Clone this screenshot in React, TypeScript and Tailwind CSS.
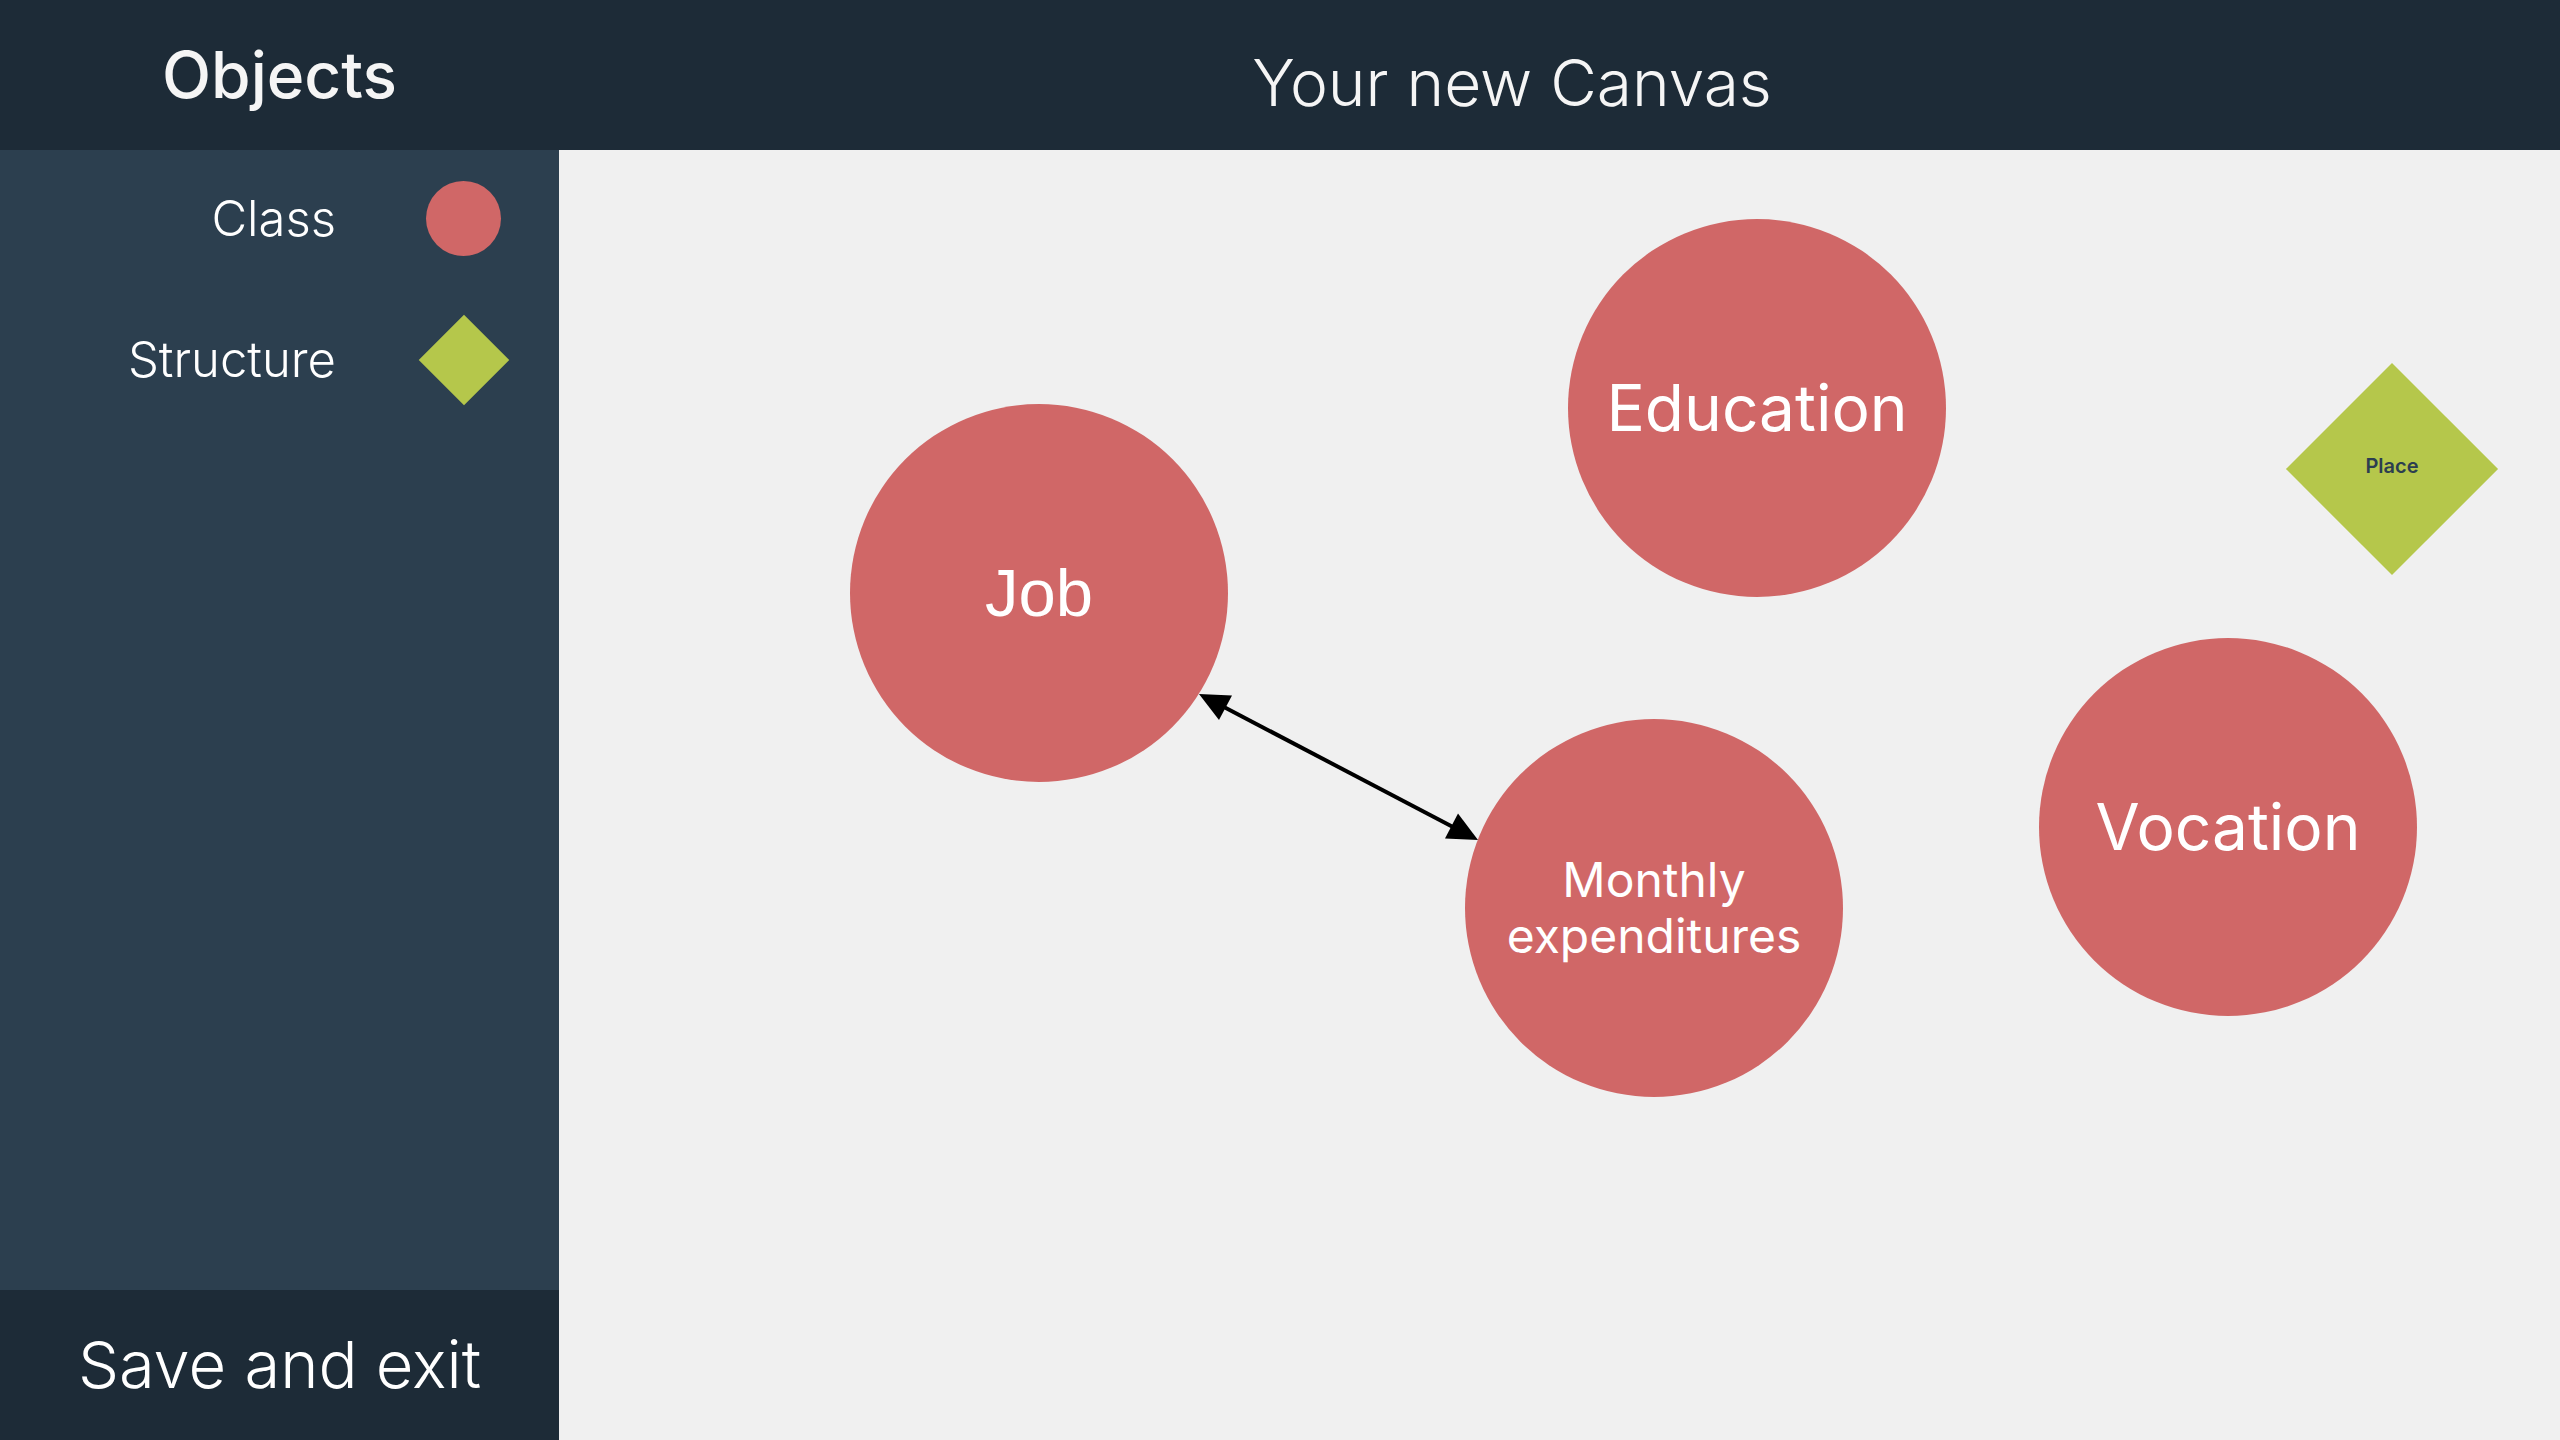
import React from "react";

type Node = {
  label: string;
  left: string;
  top: string;
  text: string;
};

const nodes: Node[] = [
  { label: "Education", left: "left-[1009px]", top: "top-[69px]", text: "text-[64px]" },
  { label: "Vocation", left: "left-[1480px]", top: "top-[488px]", text: "text-[64px]" },
];

function Circle({ node }: { node: Node }) {
  return (
    <div
      className={`absolute ${node.left} ${node.top} w-[378px] h-[378px] rounded-full bg-[#d06767] flex items-center justify-center text-white ${node.text}`}
    >
      {node.label}
    </div>
  );
}

export default function App() {
  return (
    <div className="h-screen w-full flex flex-col overflow-hidden font-['Inter','Noto_Sans',sans-serif]">
      {/* Header */}
      <div className="h-[150px] flex bg-[#1d2b37] text-[#f5f5f5]">
        <div className="w-[559px] flex items-center justify-center text-[64px] font-medium">
          Objects
        </div>
        <div className="flex-1 flex items-center justify-center pt-[15px] pr-[95px] text-[64px] font-light">
          Your new Canvas
        </div>
      </div>

      <div className="flex-1 flex">
        {/* Sidebar */}
        <div className="w-[559px] flex flex-col bg-[#2c3f4f]">
          <div className="flex-1 flex flex-col gap-[50px] pt-[23px] text-[49px] font-light text-white">
            <div className="h-[91px] flex items-center">
              <span className="w-[336px] text-right">Class</span>
              <div className="ml-[90px] w-[75px] flex justify-center">
                <div className="w-[75px] h-[75px] rounded-full bg-[#d06767]" />
              </div>
            </div>
            <div className="h-[91px] flex items-center">
              <span className="w-[336px] text-right">Structure</span>
              <div className="ml-[90px] w-[75px] flex justify-center">
                <div className="w-[64px] h-[64px] rotate-45 bg-[#b5c74b]" />
              </div>
            </div>
          </div>
          <button className="h-[150px] bg-[#1d2b37] text-white text-[65px] font-light flex items-center justify-center">
            Save and exit
          </button>
        </div>

        {/* Canvas */}
        <div className="flex-1 relative bg-[#f0f0f0]">
          <svg className="absolute inset-0 w-full h-full" xmlns="http://www.w3.org/2000/svg">
            <line x1="664" y1="556.5" x2="894" y2="677" stroke="#000" strokeWidth="4" />
            <polygon points="640,544 660,570 673,545.5" fill="#000" />
            <polygon points="919,690 886,688.5 899,663.5" fill="#000" />
          </svg>

          {nodes.map((n) => (
            <Circle key={n.label} node={n} />
          ))}

          <div className="absolute left-[291px] top-[254px] w-[378px] h-[378px] rounded-full bg-[#d06767] flex items-center justify-center text-white text-[67px] font-['Liberation_Sans',Arial,sans-serif]">
            Job
          </div>

          <div className="absolute left-[906px] top-[569px] w-[378px] h-[378px] rounded-full bg-[#d06767] flex items-center justify-center text-center text-white text-[48px] leading-[56px]">
            Monthly
            <br />
            expenditures
          </div>

          <div className="absolute left-[1758px] top-[244px] w-[150px] h-[150px] flex items-center justify-center">
            <div className="absolute inset-0 rotate-45 bg-[#b5c74b]" />
            <span className="relative -mt-[6px] text-[20px] font-semibold text-[#2c3e50]">Place</span>
          </div>
        </div>
      </div>
    </div>
  );
}
